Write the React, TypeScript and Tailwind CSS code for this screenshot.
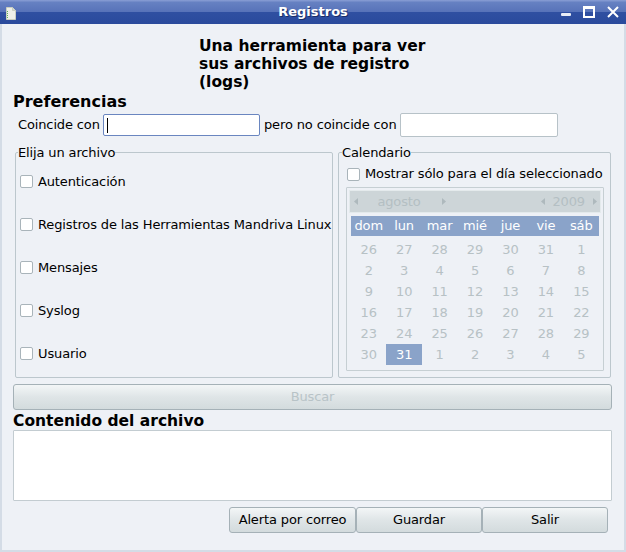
import React from 'react'

const FILES = ['Autenticación', 'Registros de las Herramientas Mandriva Linux', 'Mensajes', 'Syslog', 'Usuario']
const DAYS = ['dom', 'lun', 'mar', 'mié', 'jue', 'vie', 'sáb']
const WEEKS = [
  [26, 27, 28, 29, 30, 31, 1],
  [2, 3, 4, 5, 6, 7, 8],
  [9, 10, 11, 12, 13, 14, 15],
  [16, 17, 18, 19, 20, 21, 22],
  [23, 24, 25, 26, 27, 28, 29],
  [30, 31, 1, 2, 3, 4, 5],
]

const FONT = "font-['DejaVu_Sans','Liberation_Sans',sans-serif]"

function Check() {
  return <span className="inline-block h-[13px] w-[13px] shrink-0 rounded-[2px] border border-[#a9b4ba] bg-white" />
}

function Arrow({ dir }: { dir: 'l' | 'r' }) {
  return (
    <svg width="4" height="7" viewBox="0 0 4 7" className="shrink-0">
      <path d={dir === 'l' ? 'M4 0 L0 3.5 L4 7 Z' : 'M0 0 L4 3.5 L0 7 Z'} fill="#aeb9bd" />
    </svg>
  )
}

function Button({ label, className = '', disabled = false }: { label: string; className?: string; disabled?: boolean }) {
  return (
    <div
      className={`flex h-[26px] items-center justify-center rounded-[3px] border border-[#a5b1b7] bg-[linear-gradient(to_bottom,#f3f6f7,#dfe5e7_50%,#d3dbdd)] text-[13px] ${
        disabled ? 'text-[#b8c3c7]' : 'text-black'
      } ${className}`}
    >
      {label}
    </div>
  )
}

function TitleBar() {
  return (
    <div className="relative flex h-[24px] items-center justify-center bg-[linear-gradient(to_bottom,#8a9fd5_0%,#6681c2_10%,#5873b9_48%,#2f4fa1_52%,#2a4a9c_100%)]">
      <svg width="10" height="13" viewBox="0 0 10 13" className="absolute left-[6px] top-[7px]">
        <path d="M0.5 0.5 H6.5 L9.5 3.5 V12.5 H0.5 Z" fill="#eef0e8" stroke="#c9cec0" />
        <path d="M6.5 0.5 V3.5 H9.5" fill="#d8dccd" stroke="#c9cec0" />
        <rect x="1" y="4" width="1" height="1" fill="#5fb35a" />
        <rect x="1" y="6" width="1" height="1" fill="#5fb35a" />
        <rect x="1" y="8" width="1" height="1" fill="#5fb35a" />
        <rect x="1" y="10" width="1" height="1" fill="#5fb35a" />
      </svg>
      <span className="text-[13px] font-bold tracking-normal text-white [text-shadow:1px_1px_0_#1b2d66]">Registros</span>
      <div className="absolute right-[7px] top-[6px] flex items-center gap-[12px]">
        <span className="mt-[5px] block h-[3px] w-[10px] rounded-[1px] bg-[#e9edf6]" />
        <span className="block h-[12px] w-[12px] border-[2px] border-white border-t-[3px]" />
        <svg width="12" height="12" viewBox="0 0 12 12">
          <path d="M1 1 L11 11 M11 1 L1 11" stroke="white" strokeWidth="2" />
        </svg>
      </div>
    </div>
  )
}

function Calendar() {
  return (
    <div className="mx-[6px] ml-[7px] mt-[3px] rounded-[1px] border border-[#c6cfd3] pb-[5px]">
      <div className="m-[2px] flex h-[23px] items-center border border-[#e4eaec] bg-[#cdd5d8] pl-[4px] pr-[3px] text-[13px] text-[#b4bfc3]">
        <Arrow dir="l" />
        <span className="ml-[17px] w-[48px] text-center">agosto</span>
        <span className="ml-[19px]"><Arrow dir="r" /></span>
        <span className="flex-1" />
        <Arrow dir="l" />
        <span className="ml-[7px]">2009</span>
        <span className="ml-[8px]"><Arrow dir="r" /></span>
      </div>
      <div className="mx-[4px] mt-[3px] grid h-[20px] grid-cols-7 items-center bg-[#8aa3c9] text-[13px] text-white">
        {DAYS.map((d) => (
          <span key={d} className="text-center">{d}</span>
        ))}
      </div>
      <div className="mx-[4px] mt-[3px] grid grid-cols-7 text-[13px] text-[#b7c1c5]">
        {WEEKS.map((w, wi) =>
          w.map((n, di) => {
            const sel = wi === 5 && di === 1
            return (
              <span
                key={`${wi}-${di}`}
                className={`flex h-[21px] items-center justify-center ${sel ? 'bg-[#8aa3c9] text-white' : ''}`}
              >
                {n}
              </span>
            )
          }),
        )}
      </div>
    </div>
  )
}

export default function App() {
  return (
    <div className={`${FONT} flex h-[552px] w-[626px] flex-col overflow-hidden bg-[#eef1f6] text-[13px] tracking-[-0.13px] text-black`}>
      <TitleBar />
      <div className="flex flex-1 flex-col border-x-[2px] border-b-[2px] border-[#d4dce6] pl-[11px] pr-[12px]">
        {/* cabecera */}
        <div className="ml-[186px] mt-[13px] text-[15.5px] font-bold leading-[18px] tracking-normal">
          Una herramienta para ver
          <br />
          sus archivos de registro
          <br />
          (logs)
        </div>
        <div className="mt-[2px] text-[16px] font-bold leading-[18px] tracking-normal">Preferencias</div>

        <div className="mt-[2px] flex h-[24px] items-center">
          <span className="ml-[5px] w-[80px] whitespace-nowrap">Coincide con</span>
          <div className="ml-[5px] flex h-[22px] w-[157px] items-center rounded-[2px] border border-[#6a86c0] bg-white px-[3px]">
            <span className="block h-[15px] w-px bg-black" />
          </div>
          <span className="ml-[4px] w-[132px] whitespace-nowrap">pero no coincide con</span>
          <div className="ml-[4px] h-[24px] w-[158px] rounded-[2px] border border-[#b7c2c8] bg-white" />
        </div>

        {/* marcos */}
        <div className="mt-[8px] flex gap-[5px] px-[2px]">
          <fieldset className="h-[233px] w-[318px] min-w-0 shrink-0 rounded-[2px] border border-[#bcc7cd] px-[4px]">
            <legend className="-ml-[2px] px-0 leading-[15px]">Elija un archivo</legend>
            <div className="flex flex-col">
              {FILES.map((f) => (
                <label key={f} className="flex h-[43px] items-center gap-[5px] whitespace-nowrap">
                  <Check />
                  <span>{f}</span>
                </label>
              ))}
            </div>
          </fieldset>
          <fieldset className="h-[233px] w-[273px] min-w-0 shrink-0 rounded-[2px] border border-[#bcc7cd]">
            <legend className="ml-[3px] px-0 leading-[15px]">Calendario</legend>
            <label className="ml-[8px] mt-[4px] flex h-[20px] items-center gap-[5px] whitespace-nowrap">
              <Check />
              <span>Mostrar sólo para el día seleccionado</span>
            </label>
            <Calendar />
          </fieldset>
        </div>

        <Button label="Buscar" disabled className="mt-[6px]" />

        <div className="mt-[2px] text-[15.5px] font-bold leading-[18px] tracking-normal">Contenido del archivo</div>
        <div className="h-[71px] rounded-[1px] border border-[#c3ccd1] bg-white" />

        <div className="mr-[4px] mt-[6px] flex justify-end">
          <Button label="Alerta por correo" className="w-[127px]" />
          <Button label="Guardar" className="w-[126px]" />
          <Button label="Salir" className="w-[126px]" />
        </div>
      </div>
    </div>
  )
}
